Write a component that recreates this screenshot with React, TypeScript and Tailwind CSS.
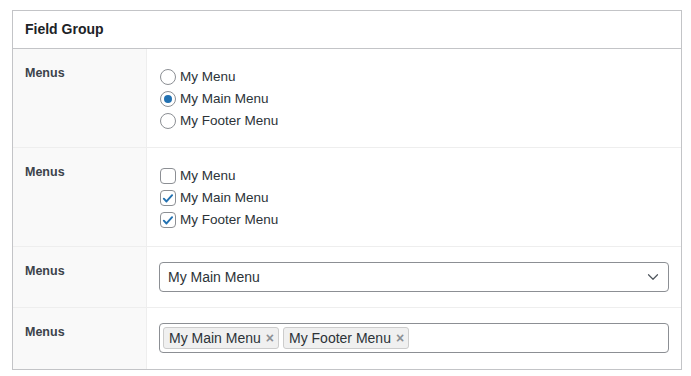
import { ChevronDown } from "lucide-react";

const FONT = "font-['Liberation_Sans',Arial,sans-serif]";

function Radio({ checked = false }: { checked?: boolean }) {
  return (
    <span className="flex h-4 w-4 shrink-0 items-center justify-center rounded-full border border-[#8c8f94] bg-white">
      {checked && <span className="h-2 w-2 rounded-full bg-[#2271b1]" />}
    </span>
  );
}

function Checkbox({ checked = false }: { checked?: boolean }) {
  return (
    <span className="flex h-4 w-4 shrink-0 items-center justify-center rounded-[4px] border border-[#8c8f94] bg-white">
      {checked && (
        <svg viewBox="0 0 16 16" className="h-[15px] w-[15px]">
          <path d="M3.2 8.2l3.1 3.2 6.4-7.2" fill="none" stroke="#2271b1" strokeWidth="2.2" strokeLinecap="round" strokeLinejoin="round" />
        </svg>
      )}
    </span>
  );
}

const MENUS = ["My Menu", "My Main Menu", "My Footer Menu"];

function Row({ children, last = false }: { children: React.ReactNode; last?: boolean }) {
  return (
    <div className={`flex ${last ? "" : "border-b border-[#eeeeee]"}`}>
      <div className="w-[134px] shrink-0 border-r border-[#eeeeee] bg-[#f9f9f9] px-3 pt-[15px] text-[12.5px] font-bold leading-[18px] text-[#3c434a]">
        Menus
      </div>
      <div className={`flex-1 px-3 pt-[15px] ${last ? "pb-[16px]" : "pb-[15px]"}`}>{children}</div>
    </div>
  );
}

function Tag({ label }: { label: string }) {
  return (
    <span className="flex h-[22px] items-center gap-[5px] rounded-[3px] border border-[#cccccc] bg-[#f0f0f0] pl-[5px] pr-[4px] text-[14px] text-[#2c3338]">
      {label}
      <span className="text-[14px] font-bold leading-none text-[#8c8f94]">×</span>
    </span>
  );
}

export default function App() {
  return (
    <div className={`${FONT} bg-white pl-3 pt-[10px] text-[#2c3338]`}>
      <div className="w-[670px] border border-[#c3c4c7] bg-white">
        <div className="flex h-[38px] items-center border-b border-[#c3c4c7] px-3 text-[14px] font-bold text-[#1d2327]">
          Field Group
        </div>

        <Row>
          <div className="flex flex-col pt-[2px]">
            {MENUS.map((m, i) => (
              <label key={m} className="flex h-[22px] items-center gap-[4px] pl-[1px] text-[13.5px]">
                <Radio checked={i === 1} />
                {m}
              </label>
            ))}
          </div>
        </Row>

        <Row>
          <div className="flex flex-col pt-[2px]">
            {MENUS.map((m, i) => (
              <label key={m} className="flex h-[22px] items-center gap-[4px] pl-[1px] text-[13.5px]">
                <Checkbox checked={i > 0} />
                {m}
              </label>
            ))}
          </div>
        </Row>

        <Row>
          <div className="flex h-[30px] items-center justify-between rounded-[4px] border border-[#8c8f94] bg-white pl-2 pr-[6px] text-[14px]">
            <span>My Main Menu</span>
            <ChevronDown className="h-[18px] w-[18px] text-[#50575e]" strokeWidth={1.6} />
          </div>
        </Row>

        <Row last>
          <div className="flex h-[30px] items-center gap-1 rounded-[4px] border border-[#8c8f94] bg-white px-[3px]">
            <Tag label="My Main Menu" />
            <Tag label="My Footer Menu" />
          </div>
        </Row>
      </div>
    </div>
  );
}
